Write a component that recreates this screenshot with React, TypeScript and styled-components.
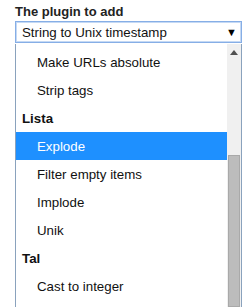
import React from 'react';
import styled, { createGlobalStyle } from 'styled-components';

const GlobalStyle = createGlobalStyle`
  html, body {
    margin: 0;
    padding: 0;
    background: #ffffff;
    overflow: hidden;
  }
  body {
    font-family: "Liberation Sans", Arial, sans-serif;
    color: #1a1a1a;
  }
`;

interface IOption {
  label: string;
  group?: boolean;
  selected?: boolean;
}

const OPTIONS: IOption[] = [
  { label: 'Make URLs absolute' },
  { label: 'Strip tags' },
  { label: 'Lista', group: true },
  { label: 'Explode', selected: true },
  { label: 'Filter empty items' },
  { label: 'Implode' },
  { label: 'Unik' },
  { label: 'Tal', group: true },
  { label: 'Cast to integer' },
];

const Page = styled.div`
  width: 244px;
  height: 307px;
  padding: 4px 2px 0 15px;
  box-sizing: border-box;
  display: flex;
  flex-direction: column;
`;

const Label = styled.div`
  font-size: 13px;
  font-weight: bold;
  color: #222;
  line-height: 15px;
  margin-bottom: 2px;
`;

const SelectBox = styled.div`
  height: 22px;
  box-sizing: border-box;
  border: 1px solid #86aee6;
  box-shadow: inset 0 0 0 1px #c5d9f4;
  display: flex;
  align-items: center;
  justify-content: space-between;
  padding: 0 4px 0 6px;
  font-size: 13.3px;
  color: #111;
  background: #fff;
`;

const Arrow = styled.span`
  font-size: 11px;
  color: #000;
`;

const Dropdown = styled.div`
  flex: 1;
  display: flex;
  border-left: 1px solid #8aa2bd;
  border-right: 1px solid #8aa2bd;
  margin-top: 1px;
  overflow: hidden;
`;

const List = styled.div`
  flex: 1;
  padding-top: 4px;
`;

const Row = styled.div<{ $group?: boolean; $selected?: boolean }>`
  height: 28px;
  display: flex;
  align-items: center;
  padding-left: ${(p) => (p.$group ? '6px' : '21px')};
  font-size: 13.3px;
  font-weight: ${(p) => (p.$group ? 'bold' : 'normal')};
  background: ${(p) => (p.$selected ? '#1e90ff' : 'transparent')};
  color: ${(p) => (p.$selected ? '#fff' : '#111')};
  white-space: nowrap;
`;

const Scrollbar = styled.div`
  width: 14px;
  background: #f0f0f0;
  display: flex;
  flex-direction: column;
  align-items: center;
`;

const ScrollArrow = styled.div`
  height: 16px;
  display: flex;
  align-items: center;
  justify-content: center;
`;

const Track = styled.div`
  flex: 1;
  width: 100%;
  padding-top: 95px;
  box-sizing: border-box;
  display: flex;
`;

const Thumb = styled.div`
  flex: 1;
  margin: 0 1px;
  background: #bcbcbc;
  border: 1px solid #a9a9a9;
`;

export default function App() {
  return (
    <>
      <GlobalStyle />
      <Page>
        <Label>The plugin to add</Label>
        <SelectBox>
          <span>String to Unix timestamp</span>
          <Arrow>▼</Arrow>
        </SelectBox>
        <Dropdown>
          <List>
            {OPTIONS.map((o) => (
              <Row key={o.label} $group={o.group} $selected={o.selected}>
                {o.label}
              </Row>
            ))}
          </List>
          <Scrollbar>
            <ScrollArrow>
              <svg width="8" height="5" viewBox="0 0 8 5">
                <path d="M0 5 L4 0 L8 5 Z" fill="#505050" />
              </svg>
            </ScrollArrow>
            <Track>
              <Thumb />
            </Track>
          </Scrollbar>
        </Dropdown>
      </Page>
    </>
  );
}
